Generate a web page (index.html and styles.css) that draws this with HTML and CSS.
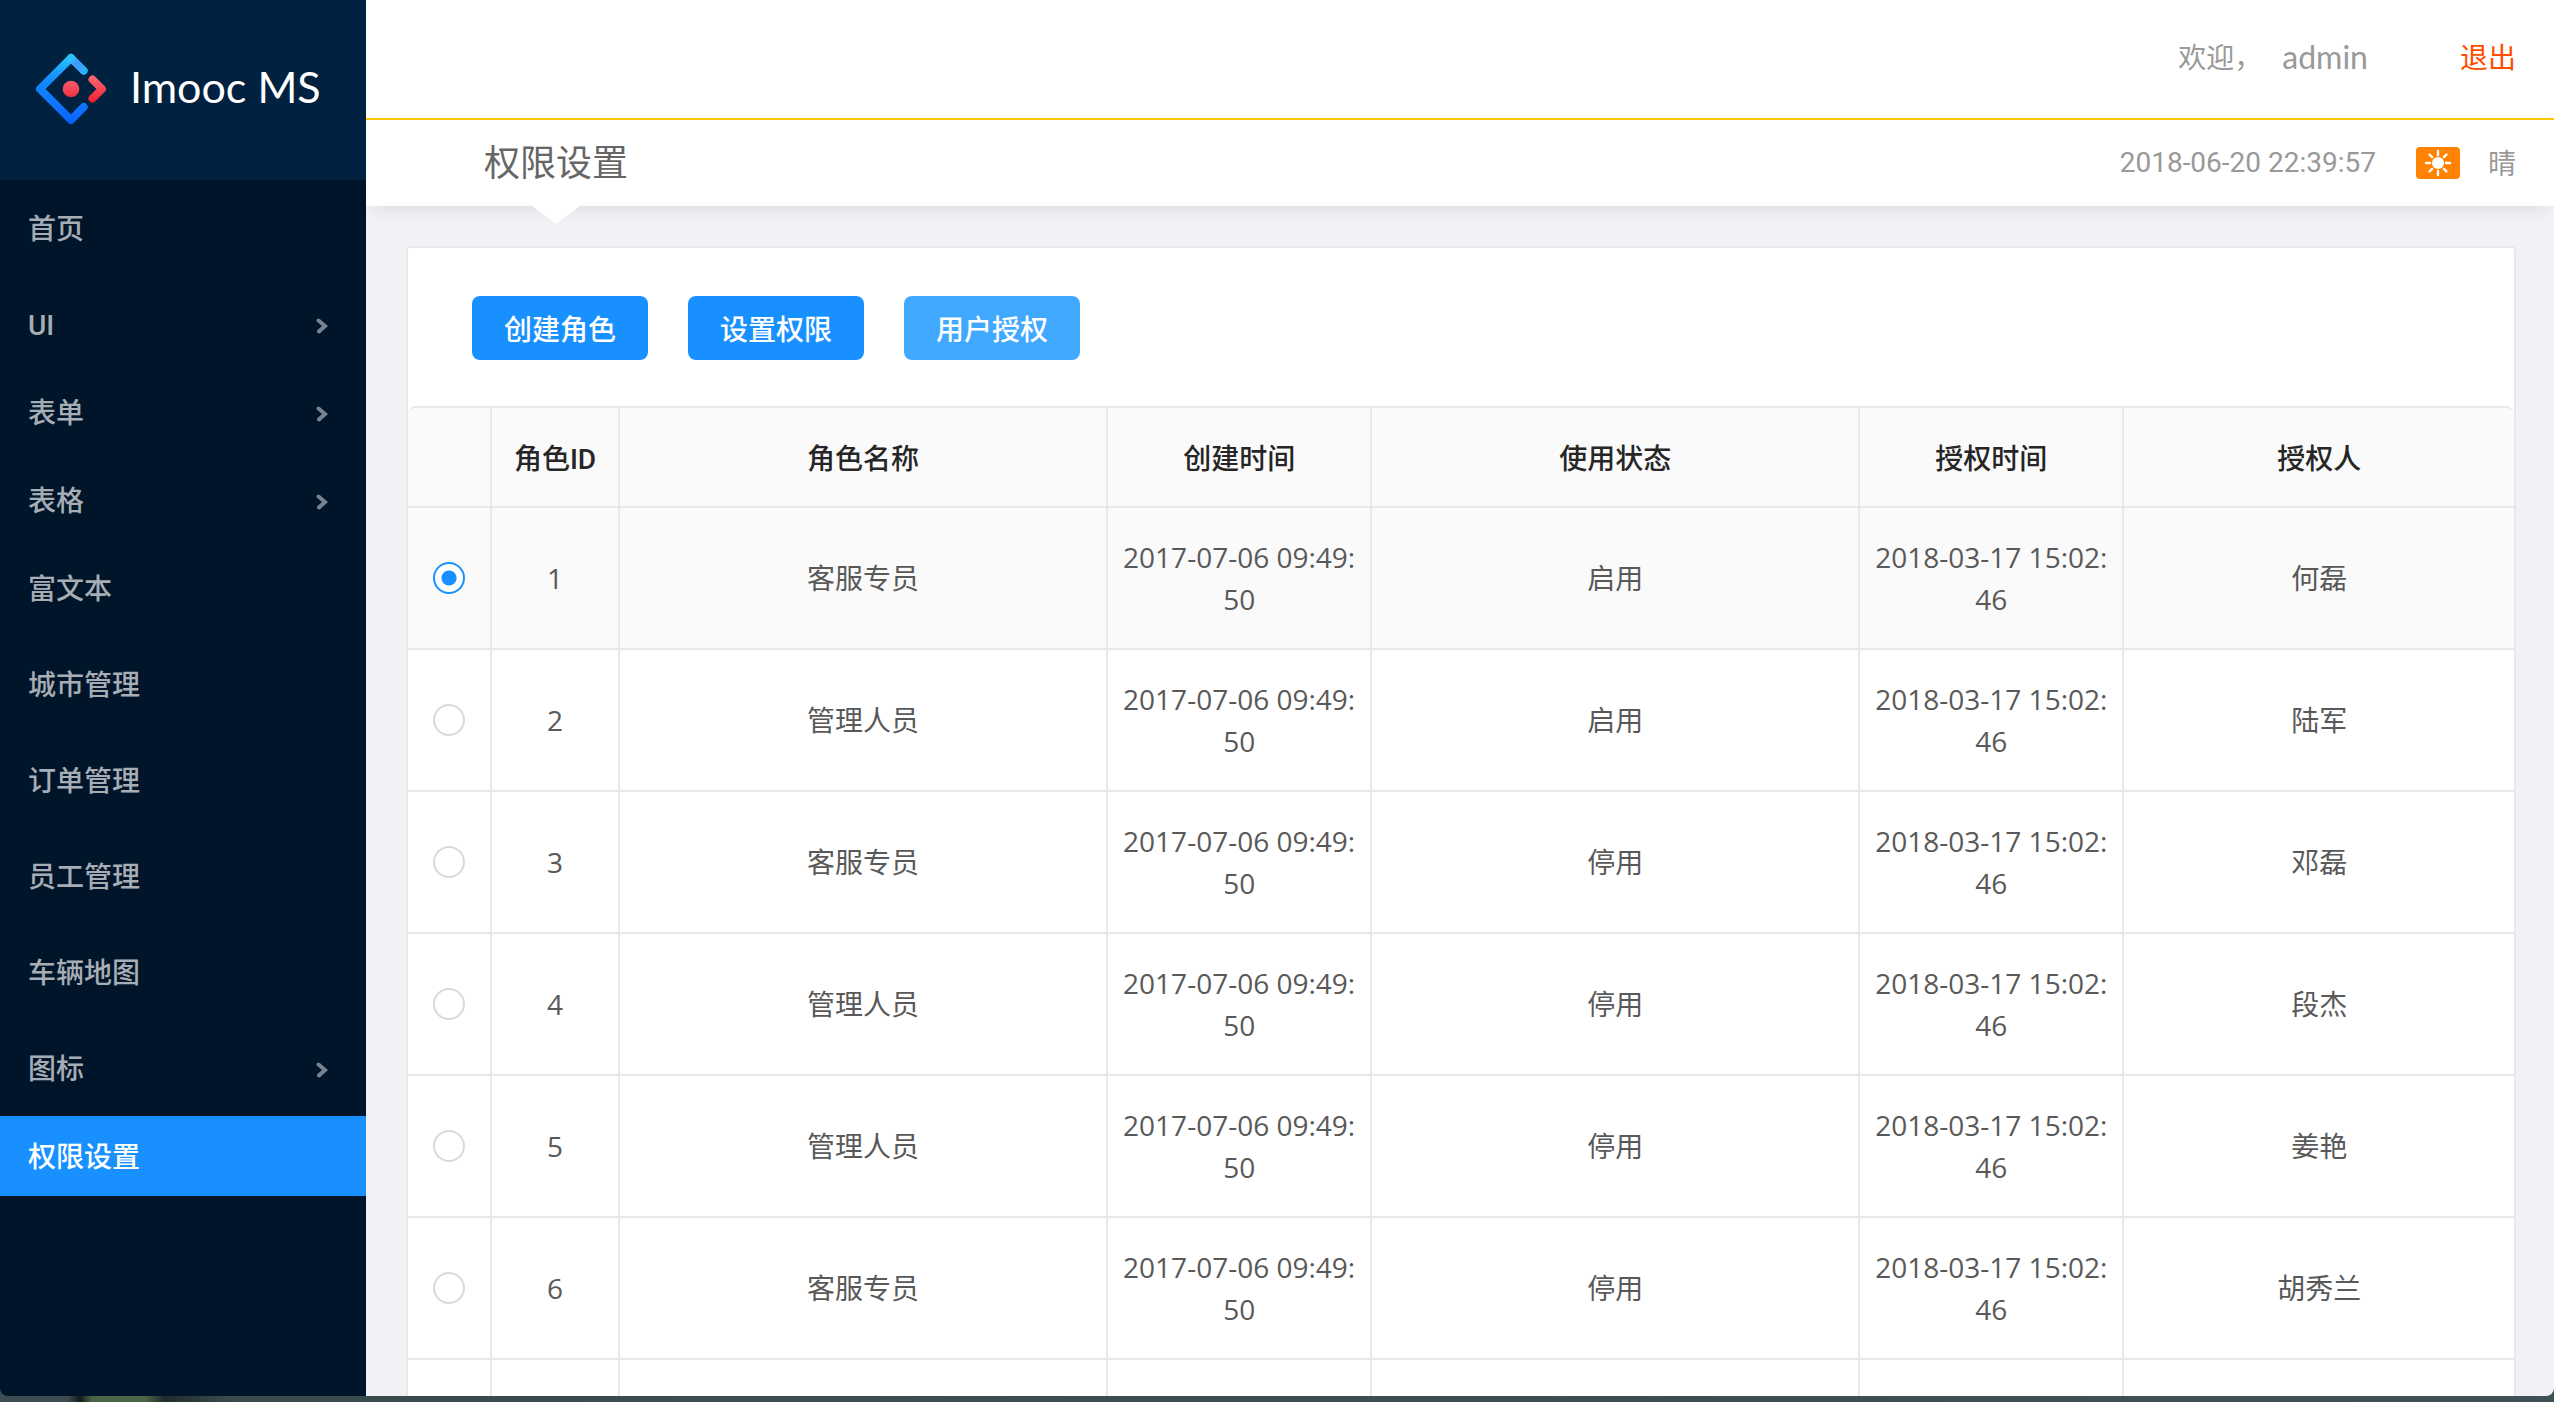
FILE: index.html
```html
<!DOCTYPE html>
<html lang="zh-CN">
<head>
<meta charset="utf-8">
<title>Imooc MS</title>
<link rel="stylesheet" href="styles.css">
</head>
<body>
<div class="window">
  <aside class="sidebar">
    <div class="logo">
      <svg class="logo-mark" viewBox="0 0 70 70" fill="none" stroke-width="8" stroke-linecap="round" stroke-linejoin="round" aria-hidden="true">
        <defs>
          <linearGradient id="blue" gradientUnits="userSpaceOnUse" x1="38" y1="0" x2="32" y2="70">
            <stop offset="0" stop-color="#29cdff"/>
            <stop offset="0.38" stop-color="#148eff"/>
            <stop offset="1" stop-color="#0a60ff"/>
          </linearGradient>
          <linearGradient id="sky" gradientUnits="userSpaceOnUse" x1="36" y1="4" x2="48" y2="17">
            <stop offset="0" stop-color="#29c4ff"/>
            <stop offset="0.4" stop-color="#3f97fb"/>
            <stop offset="1" stop-color="#2fb0ff"/>
          </linearGradient>
          <linearGradient id="red" gradientUnits="userSpaceOnUse" x1="0" y1="20" x2="0" y2="48">
            <stop offset="0" stop-color="#fa6a6e"/>
            <stop offset="0.5" stop-color="#f74a5c"/>
            <stop offset="1" stop-color="#f51d2c"/>
          </linearGradient>
        </defs>
        <path d="M35 4 4 35 35 66 47.7 53" stroke="url(#blue)"/>
        <path d="M47.7 16.7 35 4" stroke="url(#sky)"/>
        <path d="M56.5 25.5 66 35 56.5 44.5" stroke="url(#red)"/>
        <circle cx="35" cy="35" r="8.3" fill="url(#red)"/>
      </svg>
      <h1 class="logo-name">Imooc MS</h1>
    </div>
    <nav>
      <ul class="menu">
        <li class="item"><a href="#">首页</a></li>
        <li class="submenu"><a href="#">UI<svg class="arrow" viewBox="0 0 12 16"><path d="M2.5 2.5 9 8l-6 5.5"/></svg></a></li>
        <li class="submenu"><a href="#">表单<svg class="arrow" viewBox="0 0 12 16"><path d="M2.5 2.5 9 8l-6 5.5"/></svg></a></li>
        <li class="submenu"><a href="#">表格<svg class="arrow" viewBox="0 0 12 16"><path d="M2.5 2.5 9 8l-6 5.5"/></svg></a></li>
        <li class="item"><a href="#">富文本</a></li>
        <li class="item"><a href="#">城市管理</a></li>
        <li class="item"><a href="#">订单管理</a></li>
        <li class="item"><a href="#">员工管理</a></li>
        <li class="item"><a href="#">车辆地图</a></li>
        <li class="submenu"><a href="#">图标<svg class="arrow" viewBox="0 0 12 16"><path d="M2.5 2.5 9 8l-6 5.5"/></svg></a></li>
        <li class="item active"><a href="#" aria-current="page">权限设置</a></li>
      </ul>
    </nav>
  </aside>

  <div class="main">
    <header class="header">
      <span>欢迎，</span>
      <span class="user">admin</span>
      <a class="logout" href="#">退出</a>
    </header>
    <div class="breadcrumb">
      <h2 class="title">权限设置</h2>
      <div class="weather">
        <time class="time">2018-06-20 22:39:57</time>
        <svg class="sun" viewBox="0 0 44 32" aria-hidden="true">
          <rect width="44" height="32" rx="4" fill="#ff8200"/>
          <circle cx="22" cy="16" r="6" fill="#fff"/>
          <path d="M22 4v4M22 24v4M10 16h4M30 16h4M13.500 7.500l2.600 2.600M27.900 21.900l2.600 2.600M30.500 7.500l-2.600 2.600M16.100 21.900l-2.600 2.600" stroke="#fff" stroke-width="2.400" stroke-linecap="round"/>
        </svg>
        <span>晴</span>
      </div>
    </div>

    <main class="content">
      <section class="card">
        <div class="actions">
          <button class="btn" type="button">创建角色</button>
          <button class="btn" type="button">设置权限</button>
          <button class="btn btn-hover" type="button">用户授权</button>
        </div>
        <table class="roles">
          <colgroup>
            <col class="col-radio"><col class="col-id"><col class="col-wide"><col class="col-time"><col class="col-wide"><col class="col-time"><col>
          </colgroup>
          <thead>
            <tr><th></th><th>角色ID</th><th>角色名称</th><th>创建时间</th><th>使用状态</th><th>授权时间</th><th>授权人</th></tr>
          </thead>
          <tbody>
            <tr class="selected"><td><input type="radio" name="role" id="r1" checked></td><td><label for="r1">1</label></td><td>客服专员</td><td>2017-07-06 09:49:50</td><td>启用</td><td>2018-03-17 15:02:46</td><td>何磊</td></tr>
            <tr><td><input type="radio" name="role" id="r2"></td><td><label for="r2">2</label></td><td>管理人员</td><td>2017-07-06 09:49:50</td><td>启用</td><td>2018-03-17 15:02:46</td><td>陆军</td></tr>
            <tr><td><input type="radio" name="role" id="r3"></td><td><label for="r3">3</label></td><td>客服专员</td><td>2017-07-06 09:49:50</td><td>停用</td><td>2018-03-17 15:02:46</td><td>邓磊</td></tr>
            <tr><td><input type="radio" name="role" id="r4"></td><td><label for="r4">4</label></td><td>管理人员</td><td>2017-07-06 09:49:50</td><td>停用</td><td>2018-03-17 15:02:46</td><td>段杰</td></tr>
            <tr><td><input type="radio" name="role" id="r5"></td><td><label for="r5">5</label></td><td>管理人员</td><td>2017-07-06 09:49:50</td><td>停用</td><td>2018-03-17 15:02:46</td><td>姜艳</td></tr>
            <tr><td><input type="radio" name="role" id="r6"></td><td><label for="r6">6</label></td><td>客服专员</td><td>2017-07-06 09:49:50</td><td>停用</td><td>2018-03-17 15:02:46</td><td>胡秀兰</td></tr>
            <tr><td></td><td></td><td></td><td></td><td></td><td></td><td></td></tr>
          </tbody>
        </table>
      </section>
    </main>
  </div>
</div>
</body>
</html>
```
FILE: styles.css
```css
* {
  box-sizing: border-box;
}

body {
  margin: 0;
  height: 100vh;
  padding-bottom: 6px;
  overflow: hidden;
  background: linear-gradient(90deg, #3d4c52 0, #3d4c52 68px, #14191a 80px, #4a6646 92px, #4a6646 146px, #222a2b 164px, #2b3838 190px, #3a4b4e 230px, #3f5157 100%);
  font: 28px/42px "Open Sans", "Noto Sans CJK SC", sans-serif;
  color: #595959;
}

a {
  color: inherit;
  text-decoration: none;
}

.window {
  display: flex;
  height: 100%;
  overflow: hidden;
  border-radius: 0 0 8px 8px;
}

/* Sidebar */

.sidebar {
  flex: 0 0 366px;
  background: #001529;
}

.logo {
  display: flex;
  align-items: center;
  gap: 24px;
  height: 180px;
  padding: 0 0 2px 36px;
  background: #002140;
}

.logo-mark {
  width: 70px;
  height: 70px;
  overflow: visible;
}

.logo-name {
  margin: 0 0 4px;
  font: 400 43px/60px Lato, sans-serif;
  color: #fff;
  white-space: nowrap;
}

.menu {
  display: flow-root;
  margin: 0;
  padding: 0;
  list-style: none;
  font-family: Roboto, "Noto Sans CJK SC", sans-serif;
  font-weight: 500;
  color: #a6adb4;
}

.item {
  margin: 8px 0 16px;
}

.submenu {
  margin: 8px 0;
}

.menu a {
  display: flex;
  align-items: center;
  justify-content: space-between;
  height: 80px;
  padding: 4px 38px 0 28px;
}

.active {
  background: #1890ff;
  color: #fff;
}

.arrow {
  width: 12px;
  height: 16px;
  fill: none;
  stroke: #79838d;
  stroke-width: 4;
  stroke-linecap: round;
}

/* Header */

.main {
  flex: 1;
  min-width: 0;
  background: #f0f2f5;
}

.header {
  display: flex;
  justify-content: flex-end;
  align-items: center;
  height: 120px;
  padding: 0 38px 4px 0;
  border-bottom: 2px solid #f9c700;
  background: #fff;
  color: #999;
}

.user {
  margin-left: 20px;
  font: 32px/42px Lato, sans-serif;
}

.logout {
  margin-left: 92px;
  color: #ff4c00;
}

.breadcrumb {
  display: flex;
  justify-content: space-between;
  align-items: center;
  height: 86px;
  padding: 0 38px 0 118px;
  background: #fff;
  box-shadow: 0 10px 16px -8px rgba(0, 0, 0, 0.1);
}

.title {
  position: relative;
  margin: 0;
  font-size: 36px;
  line-height: 86px;
  font-weight: 400;
  color: #666;
}

.title::after {
  content: "";
  position: absolute;
  top: 100%;
  left: 50%;
  margin-left: -24px;
  border: 24px solid transparent;
  border-top: 18px solid #fff;
  border-bottom: 0;
}

.weather {
  display: flex;
  align-items: center;
  color: #999;
}

.time {
  font-family: Roboto, sans-serif;
}

.sun {
  width: 44px;
  height: 32px;
  margin: 0 28px 0 40px;
}

/* Content */

.content {
  padding: 40px 38px 40px 40px;
}

.card {
  border: 2px solid #e8e8e8;
  border-radius: 4px;
  background: #fff;
}

.actions {
  display: flex;
  gap: 40px;
  padding: 48px 64px 46px;
}

.btn {
  height: 64px;
  padding: 2px 32px 0;
  border: 0;
  border-radius: 8px;
  background: #1890ff;
  color: #fff;
  font: inherit;
  font-weight: 500;
}

.btn-hover {
  background: #40a9ff;
}

.roles {
  width: 100%;
  table-layout: fixed;
  border-collapse: separate;
  border-spacing: 0;
  border-top: 2px solid #e8e8e8;
  border-radius: 8px 8px 0 0;
  text-align: center;
  word-break: break-all;
}

.col-radio {
  width: 84px;
}

.col-id {
  width: 128px;
}

.col-wide {
  width: 23.18%;
}

.col-time {
  width: 264px;
}

.roles th,
.roles td {
  padding: 28px 12px;
  border-right: 2px solid #e8e8e8;
  border-bottom: 2px solid #e8e8e8;
}

.roles th:last-child,
.roles td:last-child {
  border-right: 0;
}

.roles th {
  padding-top: 31px;
  padding-bottom: 25px;
  background: #fafafa;
  color: #262626;
  font-family: Roboto, "Noto Sans CJK SC", sans-serif;
  font-weight: 500;
}

.roles th:first-child {
  border-top-left-radius: 8px;
}

.roles th:last-child {
  border-top-right-radius: 8px;
}

.selected {
  background: #fafafa;
}

.roles input {
  appearance: none;
  display: block;
  width: 32px;
  height: 32px;
  margin: 0 auto;
  border: 2px solid #d9d9d9;
  border-radius: 50%;
  background: #fff;
}

.roles input:checked {
  border-color: #1890ff;
  background: radial-gradient(circle, #1890ff 7px, #fff 8px);
}
```
